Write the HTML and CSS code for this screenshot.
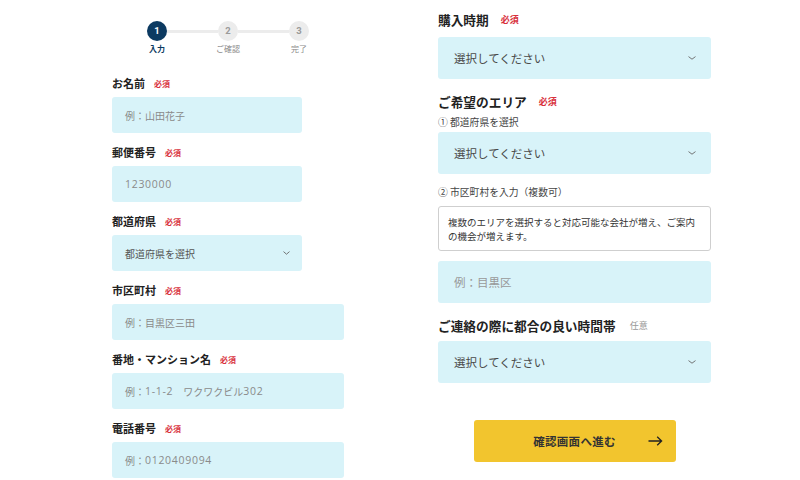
FILE: index.html
```html
<!DOCTYPE html>
<html lang="ja">
<head>
<meta charset="utf-8">
<link rel="stylesheet" href="styles.css">
</head>
<body>
<div class="page">
  <section class="col-left">
    <div class="stepper">
      <div class="step active"><span class="dot">1</span><span class="step-label">入力</span></div>
      <div class="step"><span class="dot">2</span><span class="step-label">ご確認</span></div>
      <div class="step last"><span class="dot">3</span><span class="step-label">完了</span></div>
    </div>

    <div class="field">
      <div class="label">お名前<span class="req">必須</span></div>
      <div class="input short">例：山田花子</div>
    </div>
    <div class="field">
      <div class="label">郵便番号<span class="req">必須</span></div>
      <div class="input short"><span class="num">1230000</span></div>
    </div>
    <div class="field">
      <div class="label">都道府県<span class="req">必須</span></div>
      <div class="input short select dark">都道府県を選択<svg class="chev" width="7" height="4" viewBox="0 0 7 4"><path d="M0.5 0.6 L3.5 3.2 L6.5 0.6" fill="none" stroke="#666" stroke-width="0.9"/></svg></div>
    </div>
    <div class="field">
      <div class="label">市区町村<span class="req">必須</span></div>
      <div class="input">例：目黒区三田</div>
    </div>
    <div class="field">
      <div class="label">番地・マンション名<span class="req">必須</span></div>
      <div class="input">例：<span class="num">1-1-2</span>　ワクワクビル<span class="num">302</span></div>
    </div>
    <div class="field">
      <div class="label">電話番号<span class="req">必須</span></div>
      <div class="input">例：<span class="num">0120409094</span></div>
    </div>
  </section>

  <section class="col-right">
    <div class="rlabel first">購入時期<span class="req">必須</span></div>
    <div class="rinput select">選択してください<svg class="chev" width="8" height="4" viewBox="0 0 8 4"><path d="M0.5 0.6 L4 3.2 L7.5 0.6" fill="none" stroke="#666" stroke-width="0.9"/></svg></div>

    <div class="rlabel area">ご希望のエリア<span class="req">必須</span></div>
    <div class="sub sub1">① 都道府県を選択</div>
    <div class="rinput select">選択してください<svg class="chev" width="8" height="4" viewBox="0 0 8 4"><path d="M0.5 0.6 L4 3.2 L7.5 0.6" fill="none" stroke="#666" stroke-width="0.9"/></svg></div>

    <div class="sub sub2">② 市区町村を入力（複数可）</div>
    <div class="note">複数のエリアを選択すると対応可能な会社が増え、ご案内の機会が増えます。</div>
    <div class="rinput ph">例：目黒区</div>

    <div class="rlabel contact">ご連絡の際に都合の良い時間帯<span class="opt">任意</span></div>
    <div class="rinput select">選択してください<svg class="chev" width="8" height="4" viewBox="0 0 8 4"><path d="M0.5 0.6 L4 3.2 L7.5 0.6" fill="none" stroke="#666" stroke-width="0.9"/></svg></div>

    <div class="btn-row">
      <div class="btn">確認画面へ進む<svg class="arrow" width="15" height="10" viewBox="0 0 15 10"><path d="M0.5 5 H13.5 M9.2 0.8 L13.6 5 L9.2 9.2" fill="none" stroke="#222" stroke-width="1.3"/></svg></div>
    </div>
  </section>
</div>
</body>
</html>
```

FILE: styles.css
```css
* { box-sizing: border-box; }
html, body {
  margin: 0;
  padding: 0;
  background: #ffffff;
}
body {
  font-family: "Noto Sans CJK JP", "Noto Sans", sans-serif;
  color: #222;
  width: 800px;
  height: 480px;
  overflow: hidden;
}
.page {
  display: flex;
  align-items: flex-start;
  padding-left: 112px;
}
.col-left {
  width: 232px;
  padding-top: 21px;
}
.col-right {
  width: 273px;
  margin-left: 94px;
  padding-top: 11px;
}

/* stepper */
.stepper {
  display: flex;
  justify-content: center;
  margin-bottom: 21px;
}
.step {
  width: 71px;
  display: flex;
  flex-direction: column;
  align-items: center;
  position: relative;
}
.step::after {
  content: "";
  position: absolute;
  top: 8.5px;
  left: calc(50% + 10px);
  width: 51px;
  height: 3px;
  background: #ececec;
}
.step.last::after { display: none; }
.dot {
  width: 20px;
  height: 20px;
  border-radius: 50%;
  background: #ececec;
  color: #9a9a9a;
  font-family: "Roboto", "Noto Sans", sans-serif;
  font-size: 9.5px;
  font-weight: 700;
  display: flex;
  align-items: center;
  justify-content: center;
  line-height: 1;
}
.step.active .dot {
  background: #0c3a61;
  color: #fff;
}
.step-label {
  margin-top: 3px;
  font-size: 8px;
  line-height: 10px;
  color: #8a8a8a;
  white-space: nowrap;
}
.step.active .step-label {
  color: #0c3a61;
  font-weight: 700;
}

/* left fields */
.field { margin-bottom: 11px; }
.label {
  display: flex;
  align-items: center;
  height: 16px;
  font-size: 11px;
  font-weight: 700;
  color: #222;
  margin-bottom: 6px;
}
.req {
  color: #d8303c;
  font-size: 8px;
  font-weight: 700;
  margin-left: 9px;
}
.input {
  height: 36px;
  border-radius: 3px;
  background: #d8f3f9;
  display: flex;
  align-items: center;
  padding: 0 12px 0 13px;
  font-size: 10px;
  color: #8a8a8a;
  white-space: nowrap;
}
.num {
  font-family: "Open Sans", "Noto Sans", sans-serif;
  font-size: 10.5px;
  letter-spacing: 0.7px;
}
.input.short { width: 190px; }
.input.dark { color: #555; }
.select { justify-content: space-between; }

/* right column */
.rlabel {
  display: flex;
  align-items: center;
  height: 16px;
  font-size: 12.7px;
  font-weight: 700;
  color: #222;
}
.rlabel .req {
  font-size: 9px;
  margin-left: 12px;
}
.rlabel.first { margin-bottom: 10px; }
.rlabel.area { margin-top: 14px; margin-bottom: 7px; }
.rlabel.contact { margin-top: 14px; margin-bottom: 8px; }
.opt {
  font-size: 9px;
  font-weight: 400;
  color: #999;
  margin-left: 14px;
}
.rinput {
  height: 42px;
  border-radius: 3px;
  background: #d8f3f9;
  display: flex;
  align-items: center;
  padding: 0 15px 0 16px;
  font-size: 11.5px;
  color: #4a4a4a;
  white-space: nowrap;
}
.rinput.ph { color: #999; }
.sub {
  height: 12px;
  font-size: 9.8px;
  line-height: 12px;
  color: #444;
  white-space: nowrap;
}
.sub1 { margin-bottom: 4px; }
.sub2 { margin-top: 12px; margin-bottom: 8px; }
.note {
  height: 45px;
  border: 1px solid #cfcfcf;
  border-radius: 3px;
  background: #fff;
  padding: 8px 9px;
  font-size: 9.5px;
  line-height: 14px;
  color: #333;
  margin-bottom: 10px;
}
.btn-row {
  display: flex;
  justify-content: center;
  margin-top: 37px;
}
.btn {
  position: relative;
  width: 202px;
  height: 42px;
  border-radius: 3px;
  background: #f2c52e;
  display: flex;
  align-items: center;
  justify-content: center;
  font-size: 11.5px;
  font-weight: 700;
  color: #333;
  letter-spacing: 0.3px;
}
.arrow {
  position: absolute;
  right: 13px;
  top: 16px;
}
```
